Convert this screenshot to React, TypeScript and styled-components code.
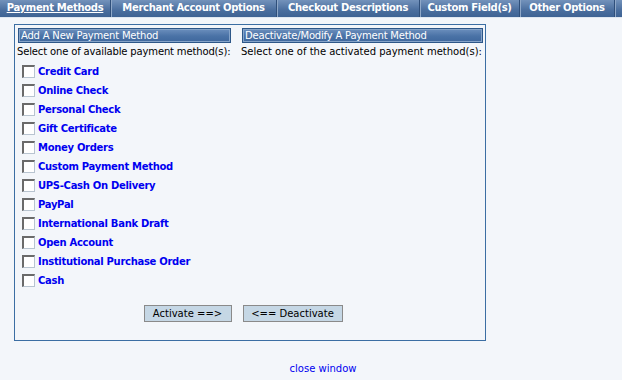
import React from "react";
import styled, { createGlobalStyle } from "styled-components";

const Global = createGlobalStyle`
  html, body { margin: 0; padding: 0; background: #f3f6fa; }
  body { font-family: "DejaVu Sans", Verdana, sans-serif; font-size: 10px; color: #000; }
`;

const Page = styled.div`
  width: 622px;
  height: 380px;
  background: #f3f6fa;
  display: flex;
  flex-direction: column;
`;

const TabBar = styled.div`
  display: flex;
  height: 17px;
  background: linear-gradient(#7392bb, #4a6e9e 60%, #3e6394);
  border-bottom: 1px solid #dfe7f0;
  align-items: center;
`;

const Tab = styled.a<{ $active?: boolean; $w: number }>`
  width: ${(p) => p.$w}px;
  box-sizing: border-box;
  height: 17px;
  line-height: 16px;
  text-align: center;
  color: #fff;
  font-weight: bold;
  font-size: 10px;
  letter-spacing: -0.3px;
  text-decoration: ${(p) => (p.$active ? "underline" : "none")};
  border-right: 1px solid #2f4f7a;
  box-shadow: 1px 0 0 #8fa8c8;
  white-space: nowrap;
`;

const Content = styled.div`
  padding: 6px 0 0 14px;
`;

const Box = styled.div`
  width: 472px;
  height: 317px;
  box-sizing: border-box;
  border: 1px solid #3b6ea3;
  padding: 3px 2px 0 3px;
  display: flex;
  flex-direction: column;
`;

const Columns = styled.div`
  display: flex;
  gap: 11px;
`;

const Column = styled.div<{ $w: number }>`
  width: ${(p) => p.$w}px;
  display: flex;
  flex-direction: column;
`;

const Header = styled.div`
  height: 15px;
  box-sizing: border-box;
  border: 1px solid #2d5788;
  box-shadow: inset 0 0 0 1px #86a4c9;
  background: linear-gradient(#6c8fbd, #4a72a6 55%, #3f689d);
  color: #fff;
  font-size: 10px;
  letter-spacing: -0.2px;
  line-height: 13px;
  padding-left: 2px;
  white-space: nowrap;
`;

const Hint = styled.div<{ $ls?: number }>`
  margin: 2px 0 0 -1px;
  line-height: 14px;
  letter-spacing: ${(p) => p.$ls ?? -0.1}px;
  white-space: nowrap;
`;

const List = styled.div`
  display: flex;
  flex-direction: column;
  padding: 5px 0 0 4px;
  gap: 5px;
`;

const Row = styled.label`
  display: flex;
  align-items: center;
  height: 14px;
  gap: 3px;
`;

const Check = styled.span`
  width: 13px;
  height: 13px;
  box-sizing: border-box;
  background: #fff;
  border-top: 2px solid #6a6a6a;
  border-left: 2px solid #6a6a6a;
  border-right: 1px solid #b8c4d0;
  border-bottom: 1px solid #b8c4d0;
`;

const MethodName = styled.span`
  color: #0000f0;
  font-weight: bold;
  font-size: 10px;
  letter-spacing: -0.3px;
  white-space: nowrap;
`;

const Buttons = styled.div`
  display: flex;
  justify-content: center;
  gap: 11px;
  margin-top: auto;
  margin-bottom: 18px;
  padding-right: 15px;
`;

const Button = styled.button<{ $w: number }>`
  width: ${(p) => p.$w}px;
  height: 17px;
  box-sizing: border-box;
  background: #c5d7e5;
  border: 1px solid #8a8a8a;
  font-family: "DejaVu Sans", Verdana, sans-serif;
  font-size: 10px;
  color: #000;
  padding: 0;
  line-height: 14px;
`;

const Footer = styled.div`
  text-align: center;
  margin-top: 22px;
  padding-left: 24px;
`;

const Close = styled.a`
  color: #0000f0;
  font-size: 10px;
  text-decoration: none;
`;

const tabs: [string, number][] = [
  ["Payment Methods", 111],
  ["Merchant Account Options", 166],
  ["Checkout Descriptions", 143],
  ["Custom Field(s)", 100],
  ["Other Options", 95],
];

const methods = [
  "Credit Card",
  "Online Check",
  "Personal Check",
  "Gift Certificate",
  "Money Orders",
  "Custom Payment Method",
  "UPS-Cash On Delivery",
  "PayPal",
  "International Bank Draft",
  "Open Account",
  "Institutional Purchase Order",
  "Cash",
];

export default function App() {
  return (
    <Page>
      <Global />
      <TabBar>
        {tabs.map(([t, w], i) => (
          <Tab key={t} $w={w} $active={i === 0}>
            {t}
          </Tab>
        ))}
      </TabBar>
      <Content>
        <Box>
          <Columns>
            <Column $w={213}>
              <Header>Add A New Payment Method</Header>
              <Hint $ls={-0.15}>Select one of available payment method(s):</Hint>
              <List>
                {methods.map((m) => (
                  <Row key={m}>
                    <Check />
                    <MethodName>{m}</MethodName>
                  </Row>
                ))}
              </List>
            </Column>
            <Column $w={241}>
              <Header>Deactivate/Modify A Payment Method</Header>
              <Hint $ls={0}>Select one of the activated payment method(s):</Hint>
            </Column>
          </Columns>
          <Buttons>
            <Button $w={88}>Activate ==&gt;</Button>
            <Button $w={100}>&lt;== Deactivate</Button>
          </Buttons>
        </Box>
      </Content>
      <Footer>
        <Close href="#">close window</Close>
      </Footer>
    </Page>
  );
}
